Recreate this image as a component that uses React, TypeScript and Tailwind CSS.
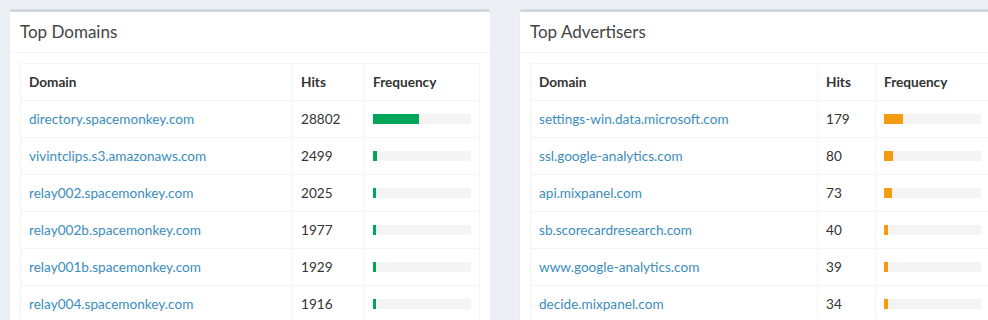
const domains = [
  { name: "directory.spacemonkey.com", hits: 28802 },
  { name: "vivintclips.s3.amazonaws.com", hits: 2499 },
  { name: "relay002.spacemonkey.com", hits: 2025 },
  { name: "relay002b.spacemonkey.com", hits: 1977 },
  { name: "relay001b.spacemonkey.com", hits: 1929 },
  { name: "relay004.spacemonkey.com", hits: 1916 },
];

const advertisers = [
  { name: "settings-win.data.microsoft.com", hits: 179 },
  { name: "ssl.google-analytics.com", hits: 80 },
  { name: "api.mixpanel.com", hits: 73 },
  { name: "sb.scorecardresearch.com", hits: 40 },
  { name: "www.google-analytics.com", hits: 39 },
  { name: "decide.mixpanel.com", hits: 34 },
];

interface Row {
  name: string;
  hits: number;
}

function DomainBox({
  title,
  rows,
  total,
  barClass,
  widths,
}: {
  title: string;
  rows: Row[];
  total: number;
  barClass: string;
  widths: [string, string, string];
}) {
  return (
    <div className="w-[480px] shrink-0 rounded-[3px] border-t-[3px] border-[#d2d6de] bg-white shadow-[0_1px_1px_rgba(0,0,0,0.1)]">
      <div className="flex h-[41px] items-center border-b border-[#f4f4f4] px-[10px] pb-[2px]">
        <h3 className="text-[17px] leading-none text-[#444]">{title}</h3>
      </div>
      <div className="p-[10px]">
        <table className="w-full table-fixed border-collapse border border-[#f4f4f4] text-[13.6px] text-[#333]">
          <thead>
            <tr className="h-[37px]">
              <th className={`${widths[0]} border border-[#f4f4f4] px-2 text-left font-bold`}>Domain</th>
              <th className={`${widths[1]} border border-[#f4f4f4] px-2 text-left font-bold`}>Hits</th>
              <th className={`${widths[2]} border border-[#f4f4f4] px-2 text-left font-bold`}>Frequency</th>
            </tr>
          </thead>
          <tbody>
            {rows.map((r) => (
              <tr key={r.name} className="h-[37px]">
                <td className="border border-[#f4f4f4] px-2">
                  <a className="text-[#3c8dbc]">{r.name}</a>
                </td>
                <td className="border border-[#f4f4f4] px-2">{r.hits}</td>
                <td className="border border-[#f4f4f4] px-2">
                  <div className="h-[10px] w-full bg-[#f4f4f4]">
                    <div
                      className={`h-full ${barClass}`}
                      style={{ width: `${Math.max(3, (r.hits / total) * 100)}%` }}
                    />
                  </div>
                </td>
              </tr>
            ))}
          </tbody>
        </table>
      </div>
    </div>
  );
}

export default function App() {
  return (
    <div className="h-[320px] w-[988px] overflow-hidden bg-[#ecf0f5] font-['Lato',sans-serif]">
      <div className="flex gap-[30px] pl-[10px] pt-[9px]">
        <DomainBox
          title="Top Domains"
          rows={domains}
          total={61000}
          barClass="bg-[#00a65a]"
          widths={["w-[272px]", "w-[72px]", "w-auto"]}
        />
        <DomainBox
          title="Top Advertisers"
          rows={advertisers}
          total={900}
          barClass="bg-[#f39c12]"
          widths={["w-[287px]", "w-[58px]", "w-auto"]}
        />
      </div>
    </div>
  );
}
